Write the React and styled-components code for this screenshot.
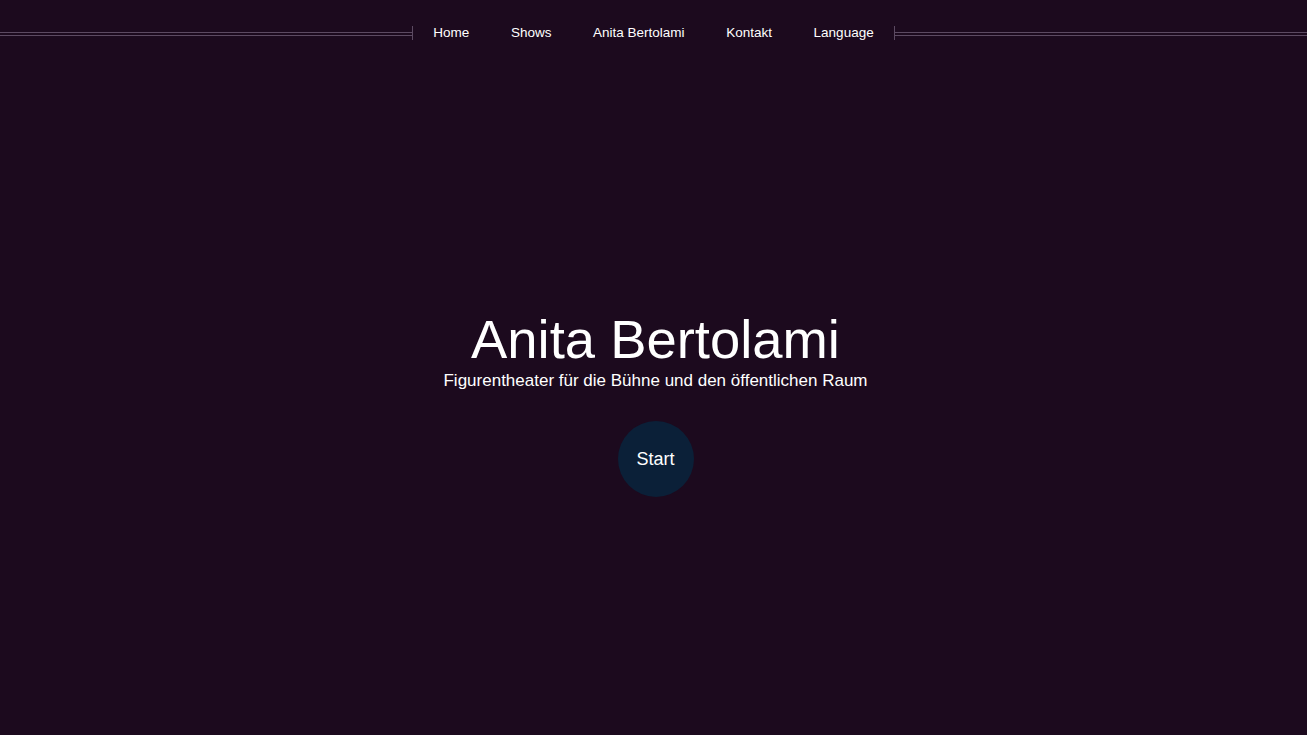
import styled, { createGlobalStyle } from "styled-components";

const GlobalStyle = createGlobalStyle`
  html, body {
    margin: 0;
    padding: 0;
    background-color: #1c0a1e;
  }
  body {
    font-family: "Liberation Sans", Arial, sans-serif;
    color: #ffffff;
  }
`;

const Page = styled.div`
  height: 735px;
  display: flex;
  flex-direction: column;
  background-color: #1c0a1e;
  overflow: hidden;
`;

const NavBar = styled.nav`
  display: flex;
  align-items: flex-start;
  height: 16px;
  padding-top: 25px;
`;

const Rule = styled.div`
  flex: 1;
  height: 2px;
  margin-top: 7px;
  border-top: 1px solid #5c4a62;
  border-bottom: 1px solid #5c4a62;
`;

const Tick = styled.span`
  width: 1px;
  height: 14px;
  margin-top: 1px;
  background-color: #5c4a62;
`;

const NavList = styled.ul`
  display: flex;
  list-style: none;
  margin: 0;
  padding: 0;
`;

const NavLink = styled.a`
  display: block;
  padding: 0 20.8px;
  font-size: 13.5px;
  line-height: 16px;
  color: #ffffff;
  text-decoration: none;
`;

const Hero = styled.section`
  flex: 1;
  display: flex;
  flex-direction: column;
  align-items: center;
  padding-top: 270px;
  padding-left: 4px;
`;

const Title = styled.h1`
  margin: 0;
  font-size: 54.4px;
  font-weight: normal;
  line-height: 58px;
`;

const Subtitle = styled.p`
  margin: 2px 0 0;
  font-size: 17px;
  line-height: 20px;
`;

const StartButton = styled.button`
  margin-top: 30px;
  width: 76px;
  height: 76px;
  border: none;
  border-radius: 50%;
  background-color: #0b2038;
  color: #ffffff;
  font-family: "Liberation Sans", Arial, sans-serif;
  font-size: 18px;
  padding: 0;
  cursor: pointer;
`;

const links = ["Home", "Shows", "Anita Bertolami", "Kontakt", "Language"];

const App = () => {
  return (
    <Page>
      <GlobalStyle />
      <NavBar>
        <Rule />
        <Tick />
        <NavList>
          {links.map((link) => (
            <li key={link}>
              <NavLink href="#">{link}</NavLink>
            </li>
          ))}
        </NavList>
        <Tick />
        <Rule />
      </NavBar>
      <Hero>
        <Title>{"Anita Bertolami"}</Title>
        <Subtitle>{"Figurentheater für die Bühne und den öffentlichen Raum"}</Subtitle>
        <StartButton>{"Start"}</StartButton>
      </Hero>
    </Page>
  );
};

export default App;
